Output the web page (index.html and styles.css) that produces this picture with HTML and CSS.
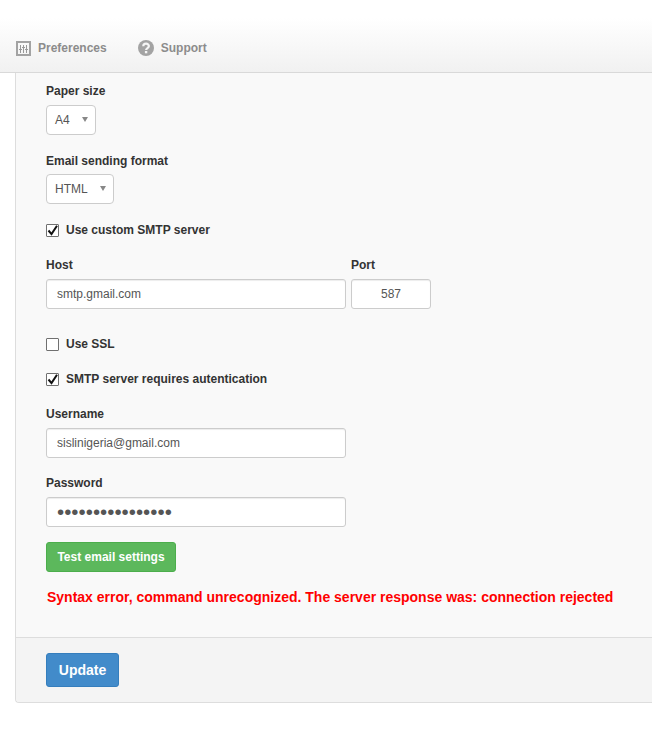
FILE: index.html
```html
<!DOCTYPE html>
<html lang="en">
<head>
<meta charset="utf-8">
<title>Preferences</title>
<link rel="stylesheet" href="styles.css">
</head>
<body>
<nav class="topbar">
  <a class="nav-item nav-prefs">
    <svg class="nav-icon" width="15" height="15" viewBox="0 0 15 15"><path fill="#a3a3a3" fill-rule="evenodd" d="M0 0h15v15H0zM2 2v11h11V2z"/><path stroke="#999" stroke-width="1" fill="none" d="M4.5 4v8M7.5 4v8M10.5 4v8M3 8.5h3M6 6.5h3M9 8.5h3"/></svg>
    <span>Preferences</span>
  </a>
  <a class="nav-item">
    <svg class="nav-icon" width="16" height="16" viewBox="0 0 16 16"><circle cx="8" cy="8" r="8" fill="#a3a3a3"/><path fill="none" stroke="#f5f5f5" stroke-width="2.2" d="M5.3 6.2c0-3.3 5.6-3.3 5.6-.1 0 2-2.8 2-2.8 4"/><rect x="6.9" y="11" width="2.4" height="2.3" fill="#f5f5f5"/></svg>
    <span>Support</span>
  </a>
</nav>
<main class="panel">
  <form class="form">
    <div class="field field-paper">
      <label class="label">Paper size</label>
      <div class="select select-paper"><span>A4</span></div>
    </div>
    <div class="field field-format">
      <label class="label">Email sending format</label>
      <div class="select select-format"><span>HTML</span></div>
    </div>
    <label class="check check-custom">
      <span class="box"><svg width="13" height="13" viewBox="0 0 13 13"><path d="M2.5 6.5l3 3.6L11 1.8" fill="none" stroke="#111" stroke-width="2"/></svg></span>
      <span>Use custom SMTP server</span>
    </label>
    <div class="host-row">
      <div class="host-col">
        <label class="label">Host</label>
        <input class="input input-wide" type="text" value="smtp.gmail.com">
      </div>
      <div class="port-col">
        <label class="label">Port</label>
        <input class="input input-port" type="text" value="587">
      </div>
    </div>
    <label class="check check-ssl">
      <span class="box"></span>
      <span>Use SSL</span>
    </label>
    <label class="check check-auth">
      <span class="box"><svg width="13" height="13" viewBox="0 0 13 13"><path d="M2.5 6.5l3 3.6L11 1.8" fill="none" stroke="#111" stroke-width="2"/></svg></span>
      <span>SMTP server requires autentication</span>
    </label>
    <div class="field field-user">
      <label class="label">Username</label>
      <input class="input input-wide" type="text" value="sislinigeria@gmail.com">
    </div>
    <div class="field field-pass">
      <label class="label">Password</label>
      <input class="input input-wide input-pass" type="password" value="abcdefghijklmnop">
    </div>
    <button class="btn btn-test" type="button">Test email settings</button>
    <p class="error">Syntax error, command unrecognized. The server response was: connection rejected</p>
  </form>
  <footer class="footer">
    <button class="btn btn-update" type="button">Update</button>
  </footer>
</main>
</body>
</html>
```
FILE: styles.css
```css
* { box-sizing: border-box; }
html, body { margin: 0; padding: 0; background: #fff; }
body { font-family: "Liberation Sans", Arial, sans-serif; font-size: 12px; color: #333; height: 732px; overflow: hidden; }

.topbar { height: 73px; display: flex; align-items: flex-end; padding: 0 0 16px 16px; background: linear-gradient(#fff 25%, #f1f1f1); border-bottom: 1px solid #d9d9d9; }
.nav-item { display: flex; align-items: center; color: #8c8c8c; font-weight: bold; height: 16px; }
.nav-icon { display: block; flex: none; margin-right: 7px; }
.nav-prefs { margin-right: 31px; }

.panel { margin-left: 15px; height: 630px; display: flex; flex-direction: column; background: #f9f9f9; border-left: 1px solid #ddd; border-bottom: 1px solid #ddd; border-bottom-left-radius: 4px; }
.form { flex: 1; padding: 0 0 0 30px; }

.label { display: block; font-weight: bold; color: #333; line-height: 14px; }
.field-paper { padding-top: 11px; }
.field-format { padding-top: 19px; }
.field .label { margin-bottom: 7px; }
.field-format .label { margin-bottom: 6px; }

.select { position: relative; height: 30px; background: #fff; border: 1px solid #ccc; border-radius: 4px; line-height: 28px; padding-left: 8px; color: #555; }
.select::after { content: ""; position: absolute; right: 7px; top: 11px; border: 3px solid transparent; border-top: 5px solid #888; border-bottom: 0; }
.select-paper { width: 50px; }
.select-format { width: 68px; }

.check { display: flex; align-items: center; font-weight: bold; line-height: 14px; color: #333; }
.box { display: block; width: 13px; height: 13px; margin-right: 7px; background: #fff; border: 1px solid #707070; border-radius: 1px; flex: none; position: relative; }
.box svg { display: block; position: absolute; left: -1px; top: -1px; }
.check-custom { margin-top: 19px; }
.check-ssl { margin-top: 28px; }
.check-auth { margin-top: 21px; }

.host-row { display: flex; gap: 5px; margin-top: 21px; }
.host-row .label { margin-bottom: 7px; }

.input { display: block; height: 30px; background: #fff; border: 1px solid #ccc; border-radius: 3px; padding: 0 10px; font: 12px "Liberation Sans", Arial, sans-serif; color: #555; outline: 0; box-shadow: inset 0 1px 1px rgba(0,0,0,.075); }
.input-wide { width: 300px; }
.input-port { width: 80px; text-align: center; }
.input-pass { font-size: 20.5px; }

.field-user { padding-top: 21px; }
.field-pass { padding-top: 18px; }

.btn { display: block; font-family: "Liberation Sans", Arial, sans-serif; font-weight: bold; color: #fff; border-radius: 3px; padding: 0; }
.btn-test { margin-top: 15px; width: 130px; height: 30px; font-size: 12px; background: #5cb85c; border: 1px solid #4cae4c; }
.btn-update { width: 73px; height: 34px; font-size: 14px; background: #428bca; border: 1px solid #357ebd; }

.error { margin: 17px 0 0 1px; font-size: 14px; line-height: 16px; font-weight: bold; color: #f00; white-space: nowrap; }

.footer { height: 65px; padding: 15px 0 0 30px; background: #f4f4f4; border-top: 1px solid #ddd; border-bottom-left-radius: 4px; }
```
